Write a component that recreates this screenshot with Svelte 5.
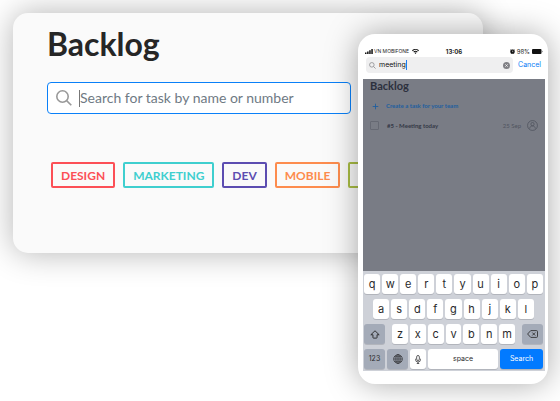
<script>
  const tags = [
    { label: 'DESIGN', color: '#fc4f56' },
    { label: 'MARKETING', color: '#3fcfcf' },
    { label: 'DEV', color: '#5c4db1' },
    { label: 'MOBILE', color: '#fd8c4e' },
    { label: 'WEB', color: '#a9bd45' }
  ];
  const topRow = [...'qwertyuiop'];
  const homeRow = [...'asdfghjkl'];
  const lowRow = [...'zxcvbnm'];
  let query = $state('meeting');
</script>

<main class="stage">
  <section class="card">
    <h1>Backlog</h1>
    <label class="search">
      <svg class="glass" viewBox="0 0 16 16" aria-hidden="true">
        <circle cx="6.5" cy="6.5" r="5.7" />
        <path d="M10.6 10.6 15.3 15.3" />
      </svg>
      <span class="caret"></span>
      <input type="text" aria-label="Search tasks" placeholder="Search for task by name or number" />
    </label>
    <div class="tags">
      {#each tags as tag}
        <button class="tag" style="color: {tag.color}">{tag.label}</button>
      {/each}
    </div>
  </section>

  <section class="phone">
    <div class="status">
      <div class="carrier">
        <svg class="signal" viewBox="0 0 8 5" aria-hidden="true">
          <path d="M0 3.4h1.5V5H0zM2.1 2.4h1.5V5H2.1zM4.2 1.2h1.5V5H4.2zM6.3 0h1.5v5H6.3z" />
        </svg>
        <span>VN MOBIFONE</span>
        <svg class="wifi" viewBox="0 0 14 10" aria-hidden="true">
          <path d="M7 0C4.300 0 1.900 1 0 2.700l1.500 1.600a8 8 0 0 1 11 0L14 2.700A10.400 10.400 0 0 0 7 0zM7 3.700c-1.700 0-3.200.6-4.400 1.700L4.100 7a4.200 4.200 0 0 1 5.800 0l1.500-1.600A6.400 6.400 0 0 0 7 3.700zM7 7.200c-.7 0-1.300.3-1.800.8L7 10l1.800-2c-.5-.5-1.100-.8-1.800-.8z" />
        </svg>
      </div>
      <b>13:06</b>
      <div class="power">
        <svg class="alarm" viewBox="0 0 10 10" aria-hidden="true">
          <circle cx="5" cy="5.300" r="3.800" />
          <path d="M.3 2.600 2.700.4M9.700 2.600 7.300.4M2 9.600l1-1.200M8 9.600 7 8.400" />
          <path class="hands" d="M5 3.200v2.300h1.700" />
        </svg>
        <span>98%</span>
        <svg class="battery" viewBox="0 0 22 10" aria-hidden="true">
          <rect width="19" height="10" rx="2" />
          <path d="M20.500 3.500v3c1.200-.5 1.200-2.500 0-3z" />
        </svg>
      </div>
    </div>

    <div class="finder">
      <label class="field">
        <svg class="glass" viewBox="0 0 16 16" aria-hidden="true">
          <circle cx="6.500" cy="6.500" r="5.200" />
          <path d="M10.500 10.500 15 15" />
        </svg>
        <input type="text" aria-label="Search" bind:value={query} />
        <span class="bar"></span>
        <button class="clear" aria-label="Clear" onclick={() => (query = '')}>
          <svg viewBox="0 0 14 14" aria-hidden="true">
            <circle cx="7" cy="7" r="7" />
            <path d="M4.500 4.500l5 5M9.500 4.500l-5 5" />
          </svg>
        </button>
      </label>
      <button class="cancel">Cancel</button>
    </div>

    <div class="screen">
      <h2>Backlog</h2>
      <button class="create">
        <svg viewBox="0 0 8 8" aria-hidden="true"><path d="M4 .8v6.400M.8 4h6.400" /></svg>
        Create a task for your team
      </button>
      <div class="task">
        <input id="task5" type="checkbox" />
        <label for="task5">#5 - Meeting today</label>
        <time>25 Sep</time>
        <svg viewBox="0 0 20 20" aria-hidden="true">
          <circle cx="10" cy="10" r="9" />
          <circle cx="10" cy="7.500" r="3" />
          <path d="M5 15.500c0-6.300 10-6.300 10 0" />
        </svg>
      </div>
    </div>

    <div class="keyboard">
      <div class="row">
        {#each topRow as key}<button class="key">{key}</button>{/each}
      </div>
      <div class="row home">
        {#each homeRow as key}<button class="key">{key}</button>{/each}
      </div>
      <div class="row low">
        <button class="key grey" aria-label="Shift">
          <svg class="shift" viewBox="0 0 18 16" aria-hidden="true">
            <path d="M9 1.300 1.500 8.500H5.300V13.500a1 1 0 0 0 1 1h5.400a1 1 0 0 0 1-1V8.500h3.800z" />
          </svg>
        </button>
        <div class="row letters">
          {#each lowRow as key}<button class="key">{key}</button>{/each}
        </div>
        <button class="key grey" aria-label="Delete">
          <svg class="back" viewBox="0 0 22 16" aria-hidden="true">
            <path d="M7.500 1.200H19a2 2 0 0 1 2 2v9.600a2 2 0 0 1-2 2H7.500L1.200 8zM10.500 5l6 6M16.500 5l-6 6" />
          </svg>
        </button>
      </div>
      <div class="row">
        <button class="key grey small">123</button>
        <button class="key grey" aria-label="Next keyboard">
          <svg class="globe" viewBox="0 0 20 20" aria-hidden="true">
            <circle cx="10" cy="10" r="8.700" />
            <ellipse cx="10" cy="10" rx="4.300" ry="8.700" />
            <path d="M10 1.300v17.400M1.300 10h17.400M2.800 5.500h14.400M2.800 14.500h14.400" />
          </svg>
        </button>
        <button class="key mic" aria-label="Dictate">
          <svg viewBox="0 0 12 18" aria-hidden="true">
            <rect x="3.300" y="1" width="5.400" height="10" rx="2.700" />
            <path d="M1 7.500v1.500a5 5 0 0 0 10 0V7.500M6 14v3M3.500 17h5" />
          </svg>
        </button>
        <button class="key space small">space</button>
        <button class="key go small">Search</button>
      </div>
    </div>
  </section>
</main>

<style>
  :global(body) {
    background: #fff;
    overflow: hidden;
  }
  .stage {
    position: relative;
    padding: 13px 77px 148px 13px;
    font-family: Lato, sans-serif;
  }
  button,
  input {
    margin: 0;
    padding: 0;
    border: 0;
    background: none;
    font: inherit;
    color: inherit;
    outline: none;
  }
  svg {
    display: block;
    flex: none;
    fill: none;
    stroke: currentColor;
  }
  h1,
  h2 {
    margin: 0;
    font-weight: 700;
  }

  .card {
    padding: 11px 34px 65px;
    border-radius: 15px;
    background: #fafafa;
    box-shadow: 0 0 32px rgba(0, 0, 0, 0.3);
    overflow: hidden;
  }
  h1 {
    font-size: 32px;
    line-height: 40px;
    color: #262626;
  }
  .search {
    display: flex;
    align-items: center;
    width: 304px;
    height: 32px;
    margin-top: 18px;
    padding: 0 8px;
    box-sizing: border-box;
    border: 1px solid #0a80f8;
    border-radius: 4px;
    background: #fff;
  }
  .search .glass {
    width: 16px;
    height: 16px;
    color: #999;
    stroke-width: 1.6;
  }
  .caret {
    width: 1px;
    height: 17px;
    margin-left: 7px;
    background: #777;
  }
  .search input {
    flex: 1;
    min-width: 0;
    font-size: 14px;
    line-height: 20px;
  }
  .search input::placeholder {
    color: #6f7a84;
    opacity: 1;
  }
  .tags {
    display: flex;
    gap: 8px;
    margin: 48px 0 0 4px;
  }
  .tag {
    flex: none;
    height: 26px;
    padding: 0 8px;
    border: 2px solid;
    border-radius: 2px;
    font-size: 12px;
    font-weight: 700;
  }

  .phone {
    position: absolute;
    top: 34px;
    right: 12px;
    width: 190px;
    padding: 13px 3px 13px 5px;
    box-sizing: border-box;
    border-radius: 17px;
    background: #fff;
    box-shadow: 0 0 32px rgba(0, 0, 0, 0.34);
    font-family: Inter, sans-serif;
  }
  .status {
    display: grid;
    grid-template-columns: 1fr auto 1fr;
    align-items: center;
    height: 9px;
    padding: 0 2px;
    font-size: 6px;
    line-height: 9px;
    color: #222;
  }
  .carrier,
  .power {
    display: flex;
    align-items: center;
    gap: 1px;
    white-space: nowrap;
  }
  .carrier {
    font-size: 5px;
  }
  .power {
    justify-content: flex-end;
    gap: 2px;
  }
  .status svg {
    fill: #111;
    stroke: none;
  }
  .signal {
    width: 8px;
    height: 5px;
  }
  .status .wifi {
    width: 7px;
    height: 5px;
    margin-left: 2px;
  }
  .status .alarm {
    width: 5px;
    height: 5px;
    stroke: #111;
    stroke-width: 1.4;
  }
  .alarm .hands {
    fill: none;
    stroke: #fff;
    stroke-width: 1;
  }
  .battery {
    width: 11px;
    height: 5px;
  }

  .finder {
    display: flex;
    align-items: center;
    gap: 5px;
    padding: 1px 4px 6px 3px;
  }
  .field {
    display: flex;
    flex: 1;
    align-items: center;
    height: 16px;
    padding: 0 3px;
    border-radius: 4px;
    background: #efeff0;
  }
  .field .glass {
    width: 7px;
    height: 7px;
    margin-right: 3px;
    color: #8a8a8e;
    stroke-width: 1.8;
  }
  .field input {
    width: 27px;
    font-size: 7px;
    line-height: 12px;
    color: #111;
  }
  .bar {
    width: 1px;
    height: 10px;
    background: #1c7cf2;
  }
  .clear {
    margin-left: auto;
  }
  .clear svg {
    width: 7px;
    height: 7px;
    fill: #808085;
    stroke: #fff;
    stroke-width: 1.4;
  }
  .clear circle {
    stroke: none;
  }
  .cancel {
    font-size: 7px;
    line-height: 12px;
    color: #0a7cf5;
  }

  .screen {
    height: 192px;
    padding: 0 7px;
    box-sizing: border-box;
    background: #797c85;
    font-family: Lato, sans-serif;
    font-size: 6px;
    color: #343846;
  }
  h2 {
    font-size: 11px;
    line-height: 13px;
    color: #2c303d;
  }
  .create {
    display: flex;
    align-items: center;
    gap: 7px;
    margin: 10px 0 0 2px;
    line-height: 8px;
    font-weight: 700;
    color: #1f5f9f;
  }
  .create svg {
    width: 7px;
    height: 7px;
  }
  .task {
    display: flex;
    align-items: center;
    height: 11px;
    margin-top: 10px;
    font-weight: 700;
  }
  .task input {
    appearance: none;
    width: 9px;
    height: 9px;
    margin-right: 8px;
    box-sizing: border-box;
    border: 1px solid #666973;
    border-radius: 1px;
  }
  .task time {
    margin: 0 6px 0 auto;
    font-weight: 400;
    color: #50545f;
  }
  .task svg {
    width: 11px;
    height: 11px;
    color: #4c505b;
    stroke-width: 1.3;
  }

  .keyboard {
    display: grid;
    gap: 5px;
    padding: 3px 2px 2px 1px;
    background: #ced1d8;
  }
  .row {
    display: flex;
    gap: 2px;
  }
  .home {
    padding: 0 9px;
  }
  .low {
    gap: 7px;
  }
  .letters {
    flex: 1;
  }
  .key {
    display: flex;
    flex: 1;
    min-width: 0;
    align-items: center;
    justify-content: center;
    height: 20px;
    border-radius: 3px;
    background: #fff;
    box-shadow: 0 1px 0 #b2b5bc;
    font-size: 11px;
    line-height: 18px;
    color: #2a2a2c;
  }
  .small {
    font-size: 7px;
  }
  .grey {
    flex: none;
    width: 21px;
    background: #a4abb8;
  }
  .mic {
    flex: none;
    width: 16px;
  }
  .go {
    flex: none;
    width: 43px;
    background: #027aff;
    color: #fff;
  }
  .shift {
    width: 10px;
    height: 9px;
    stroke-width: 1.7;
  }
  .back {
    width: 11px;
    height: 8px;
    stroke-width: 1.7;
  }
  .globe {
    width: 10px;
    height: 10px;
    stroke-width: 1.3;
  }
  .mic svg {
    width: 6px;
    height: 9px;
    stroke-width: 1.5;
  }
</style>
